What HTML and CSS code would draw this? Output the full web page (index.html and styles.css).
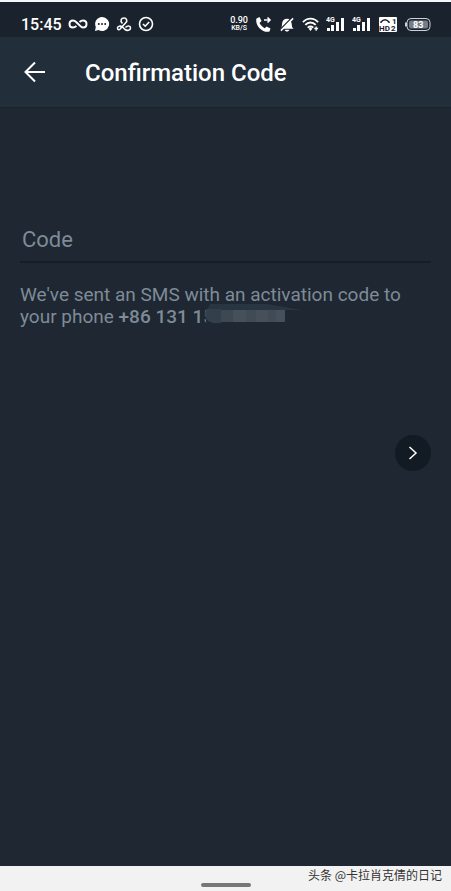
FILE: index.html
```html
<!DOCTYPE html>
<html lang="en">
<head>
<meta charset="utf-8">
<meta name="viewport" content="width=device-width, initial-scale=1">
<title>Confirmation Code</title>
<link rel="stylesheet" href="styles.css">
</head>
<body>
<div class="status">
  <div class="group left">
    <span class="clock">15:45</span>
    <svg width="20" height="16" viewBox="0 0 20 16" class="line thick"><path d="M11.500 6C13 4.700 14 4.500 15 4.500C17 4.500 18.500 6 18.500 8S17 11.500 15 11.500C11.500 11.500 9 4.500 5 4.500C3 4.500 1.500 6 1.500 8S3 11.500 5 11.500C6.200 11.500 7.200 11 8.500 10"/></svg>
    <svg width="16" height="16" viewBox="0 0 16 16"><path fill="#fff" d="M8 1a7 7 0 1 1-3.500 13L1 15l.8-4A7 7 0 0 1 8 1z"/><g fill="#1a222d"><circle cx="4.800" cy="8" r="1"/><circle cx="8" cy="8" r="1"/><circle cx="11.200" cy="8" r="1"/></g></svg>
    <svg width="16" height="16" viewBox="0 0 16 16" class="line"><path d="M6.500 7.500C3.500 4.500 5.500 2 8 2S12 5 9.500 7L4.500 12.500C3.500 14.500 1.500 14 1.500 12S4.500 9.500 6.500 11L9 13.500C11 15 14.500 14.500 14.500 12S11.500 9.500 9.500 11.500"/></svg>
    <svg width="16" height="16" viewBox="0 0 16 16" class="line"><circle cx="8" cy="8" r="6.500"/><path d="M5 8l2.200 2.200L11.200 6"/></svg>
  </div>
  <div class="group right">
    <span class="speed"><b class="rate">0.90</b><b>KB/S</b></span>
    <svg width="17" height="17" viewBox="0 0 17 17"><path fill="#fff" d="M1.500 2.500L4.500 1L6.500 5L4.500 7C6 9.500 7.500 11 9.800 12.300L11.500 10.500L15.500 12.500L14.500 15.500C8 17.500-.5 9.500 1.500 2.500z"/><path class="line" d="M9 4h6M12.500 1.500L15 4l-2.500 2.500"/></svg>
    <svg width="16" height="17" viewBox="0 0 17 17"><path fill="#fff" d="M1.500 13c1.700-1.200 1.500-3 1.700-5C3.500 4.500 5.500 2.500 8.500 2.500S13 4.500 13.500 8c.2 2 .2 3.800 2 5zM6 14h5c-.5 2.500-4.500 2.500-5 0z"/><path d="M1.500 13.500L14 1" stroke="#1a222d" stroke-width="1.500"/><path d="M2 15L15 2" class="line"/></svg>
    <svg width="17" height="17" viewBox="0 0 18 17"><path class="line thick" d="M1 6C5.500 1 12.500 1 17 6M3.500 9C6.700 5.500 11.300 5.500 14.500 9M6 11.800Q9 9.300 12 11.800"/><path fill="#fff" d="M7 13l2-1.500 2 1.500-2 2.500zM13 12h1.300v-1.500h1.400V12H17v1.400h-1.300V15h-1.400v-1.600H13z"/></svg>
    <svg width="19" height="17" viewBox="0 0 19 17"><text x="0" y="6">4G</text><path fill="#fff" d="M1 12h3v3H1zM5 9h3v6H5zM10 6h3v9h-3zM15 2h3v13h-3z"/></svg>
    <svg width="19" height="17" viewBox="0 0 19 17"><text x="0" y="6">4G</text><path fill="#fff" d="M1 12h3v3H1zM5 9h3v6H5zM10 6h3v9h-3zM15 2h3v13h-3z"/></svg>
    <svg width="20" height="17" viewBox="0 0 20 17" class="hd"><rect x="1" y="1" width="18" height="15" rx="1" fill="#fff"/><path d="M3 7V6Q7 1.500 11 6v1" fill="none" stroke="#1a222d" stroke-width="1.500"/><text x="1" y="15">HD</text><text x="14" y="8">1</text><text x="13" y="15">2</text></svg>
    <svg width="26" height="17" viewBox="0 0 26 17" class="battery"><rect x="2" y="2.500" width="23" height="12" rx="4" fill="#1a222d" stroke="#ccd2d8"/><path d="M1 6.500v4" stroke="#ccd2d8" stroke-width="2"/><rect x="4" y="4.500" width="19" height="8" rx="2" fill="#747d85"/><text x="8" y="12">83</text></svg>
  </div>
</div>
<header class="bar">
  <button class="back" aria-label="Back"><svg width="22" height="22" viewBox="0 0 22 22"><path d="M11 1.500L1.500 11L11 20.500M1.500 11H21"/></svg></button>
  <h1>Confirmation Code</h1>
</header>
<main>
  <input class="code" type="text" aria-label="Code" placeholder="Code">
  <p>We've sent an SMS with an activation code to your phone <strong>+86 131 15<svg class="mask" width="99" height="23" viewBox="0 0 99 23" aria-hidden="true"><path fill="#293540" d="M7 0H64L99 6H82V10H2z"/><path fill="#33404b" d="M3 5H18V19H8Q3 18 2 12z"/><path fill="#1e2732" d="M2 12Q4 18 9 18V22H4z"/><path fill="#3d4853" d="M18 6H30V18H18z"/><path fill="#45505b" d="M30 6H82V18H30z"/><path fill="#404b56" d="M43 6H53V18H43zM65 6H73V18H65z"/></svg></strong></p>
  <button class="next" aria-label="Next"><svg width="10" height="14" viewBox="0 0 10 14"><path d="M1.500 1L8 7L1.500 13"/></svg></button>
</main>
<footer><span class="handle"></span><span class="credit" lang="zh">头条 @卡拉肖克倩的日记</span></footer>
</body>
</html>
```
FILE: styles.css
```css
* { box-sizing: border-box; }
body {
  margin: 0;
  min-height: 100vh;
  display: flex;
  flex-direction: column;
  background: #1e2732;
  border-top: 2px solid #f3f6fa;
  font-family: Roboto, sans-serif;
}
button { border: 0; padding: 0; display: flex; align-items: center; justify-content: center; }
svg { flex: none; }
.line { fill: none; stroke: #fff; stroke-width: 1.600; }
.thick { stroke-width: 2; }
.status {
  height: 35px;
  padding: 8px 20px 0 21px;
  display: flex;
  justify-content: space-between;
  background: #1a222d;
  color: #fff;
}
.group { display: flex; align-items: center; height: 28px; }
.left { gap: 6px; }
.right { gap: 7px; }
.clock { font-size: 16px; font-weight: 500; }
.speed { display: flex; flex-direction: column; align-items: center; font-size: 7px; line-height: 8px; }
.speed b { font-weight: 500; }
.speed .rate { font-size: 9px; }
.status text { fill: #fff; font-size: 7px; font-weight: 700; }
.status .hd text { fill: #1a222d; font-size: 8px; }
.status .battery text { font-size: 9px; }
.bar {
  height: 71px;
  display: flex;
  align-items: center;
  gap: 39px;
  padding: 0 24px;
  background: #232e3b;
  border-bottom: 1px solid #19222d;
}
.back { background: none; }
.back path, .next path { fill: none; stroke: #fff; stroke-width: 2; }
.next path { stroke-width: 1.500; }
h1 { margin: 0; padding-top: 2px; font-size: 24px; font-weight: 500; color: #fff; }
main { flex: 1; padding: 109px 20px 0; display: flex; flex-direction: column; }
.code {
  width: 100%;
  height: 46px;
  padding: 0 2px;
  border: 0;
  border-bottom: 2px solid #151d27;
  background: none;
  color: #fff;
  font: 22px Roboto, sans-serif;
}
.code::placeholder { color: #7f8b97; opacity: 1; }
p { margin: 21px 0 0; font-size: 19px; line-height: 22px; color: #7f8b97; }
strong { position: relative; font-weight: 500; }
.mask { position: absolute; right: -88px; top: -1px; }
.next {
  width: 36px;
  height: 36px;
  margin-top: 107px;
  align-self: flex-end;
  border-radius: 50%;
  background: #121a24;
}
footer {
  height: 25px;
  padding: 0 9px;
  display: grid;
  grid-template-columns: 1fr 50px 1fr;
  background: #f2f2f2;
}
.handle { grid-column: 2; align-self: end; height: 4px; margin-bottom: 4px; border-radius: 2px; background: #777; }
.credit {
  justify-self: end;
  white-space: nowrap;
  font: 12px/18px "Noto Sans CJK SC", sans-serif;
  color: #333;
}
```
